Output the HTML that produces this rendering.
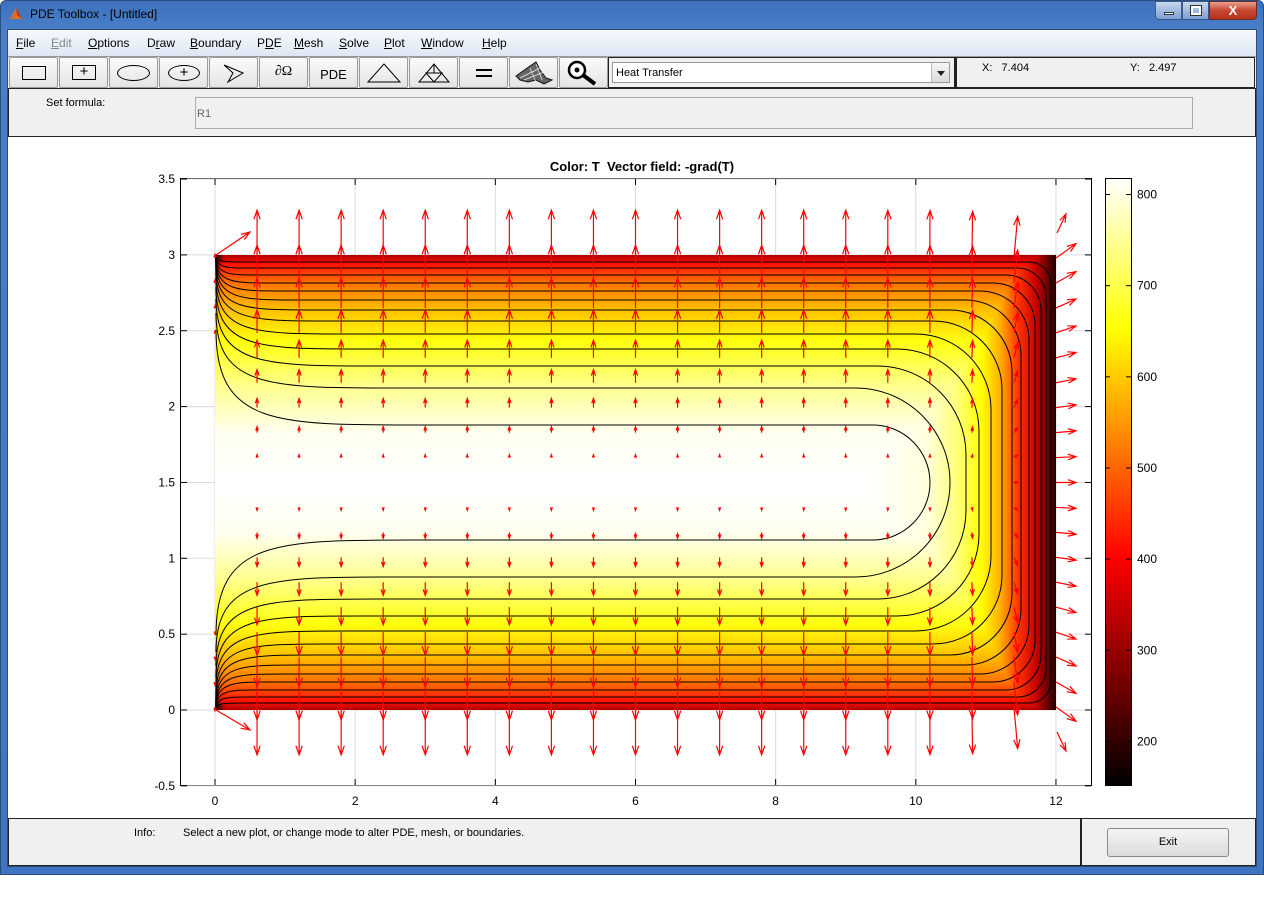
<!DOCTYPE html>
<html><head><meta charset="utf-8">
<style>
*{margin:0;padding:0;box-sizing:border-box}
body{width:1264px;height:914px;background:#fff;position:relative;overflow:hidden;font-family:"Liberation Sans",sans-serif;font-size:12px;color:#000}
.abs{position:absolute}
#frame{left:0;top:0;width:1264px;height:875px;background:linear-gradient(#3d70bd,#4a7fc8 30px,#3f74c0);border:1px solid #2a4d80;border-radius:6px 6px 0 0}
#title{left:30px;top:7px;font-size:12px}
#client{left:7px;top:29px;width:1250px;height:838px;background:#fff;border:1px solid #2c4a74}
#menu{left:8px;top:30px;width:1248px;height:26px;background:linear-gradient(#f6f9fd,#dde7f3)}
#menu span{position:absolute;top:6px;font-size:12px}
#tool{left:8px;top:56px;width:1248px;height:33px;background:#f0f0f0;border-top:1px solid #999;border-bottom:1px solid #222}
.btn{position:absolute;top:57px;width:49px;height:31px;background:linear-gradient(#fbfbfb,#e4e4e4);border:1px solid #9a9a9a;border-radius:2px}
#formula{left:8px;top:89px;width:1248px;height:48px;background:#f0f0f0;border-bottom:1px solid #222;border-left:1px solid #222;border-right:1px solid #222}
#info{left:8px;top:818px;width:1248px;height:48px;background:#f0f0f0;border:1px solid #222}
</style></head><body>
<div id="frame" class="abs"></div>
<svg class="abs" style="left:8px;top:6px" width="16" height="16"><polygon points="2,13 8,2 14,13" fill="#e8701a"/><polygon points="8,2 14,13 9,9" fill="#c0301a"/><polygon points="2,13 6,10 9,9" fill="#3a6fbf"/></svg>
<div id="title" class="abs">PDE Toolbox - [Untitled]</div>
<div class="abs" style="left:1155px;top:1px;width:27px;height:19px;border:1px solid #3b5b8c;border-radius:0 0 0 4px;background:linear-gradient(#c8d8ee,#7d9fcf)"><div class="abs" style="left:8px;top:10px;width:10px;height:3px;background:#fff;border:1px solid #333"></div></div>
<div class="abs" style="left:1182px;top:1px;width:27px;height:19px;border:1px solid #3b5b8c;background:linear-gradient(#c8d8ee,#7d9fcf)"><div class="abs" style="left:8px;top:4px;width:10px;height:9px;border:2px solid #fff;outline:1px solid #333"></div></div>
<div class="abs" style="left:1209px;top:1px;width:48px;height:19px;border:1px solid #6b2a22;border-radius:0 0 4px 0;background:linear-gradient(#e8a090,#c7462f 50%,#b83020);color:#fff;font-weight:bold;font-size:13px;text-align:center;line-height:17px">X</div>
<div id="client" class="abs"></div>
<div id="menu" class="abs">
<span style="left:8px"><u>F</u>ile</span><span style="left:43px;color:#888"><u>E</u>dit</span><span style="left:80px"><u>O</u>ptions</span><span style="left:139px">D<u>r</u>aw</span><span style="left:182px"><u>B</u>oundary</span><span style="left:249px">P<u>D</u>E</span><span style="left:286px"><u>M</u>esh</span><span style="left:331px"><u>S</u>olve</span><span style="left:376px"><u>P</u>lot</span><span style="left:413px"><u>W</u>indow</span><span style="left:474px"><u>H</u>elp</span>
</div>
<div id="tool" class="abs"></div>
<div class="btn" style="left:9px"><div class="abs" style="left:12px;top:8px;width:24px;height:14px;border:1px solid #000"></div></div>
<div class="btn" style="left:59px"><div class="abs" style="left:12px;top:7px;width:24px;height:15px;border:1px solid #000;text-align:center;line-height:12px;font-size:15px">+</div></div>
<div class="btn" style="left:109px"><div class="abs" style="left:7px;top:7px;width:33px;height:16px;border:1px solid #000;border-radius:50%"></div></div>
<div class="btn" style="left:159px"><div class="abs" style="left:8px;top:7px;width:32px;height:16px;border:1px solid #000;border-radius:50%;text-align:center;line-height:13px;font-size:15px">+</div></div>
<div class="btn" style="left:209px"><svg width="49" height="31"><path d="M14 7 L33 15 L18 24 L23 15 Z" fill="none" stroke="#000"/></svg></div>
<div class="btn" style="left:259px;text-align:center;line-height:27px;font-family:'Liberation Serif',serif;font-size:14px">∂Ω</div>
<div class="btn" style="left:309px;text-align:center;line-height:33px;font-size:13px">PDE</div>
<div class="btn" style="left:359px"><svg width="49" height="31"><path d="M8 24 L24 6 L40 24 Z" fill="none" stroke="#000"/></svg></div>
<div class="btn" style="left:409px"><svg width="49" height="31"><path d="M9 24 L24 6 L39 24 Z M16 15 L32 15 L24 24 Z M24 6 L24 15" fill="none" stroke="#000"/></svg></div>
<div class="btn" style="left:459px"><div class="abs" style="left:16px;top:11px;width:16px;height:2px;background:#000"></div><div class="abs" style="left:16px;top:17px;width:16px;height:2px;background:#000"></div></div>
<div class="btn" style="left:509px"><svg width="49" height="31"><path d="M6 18 L20 8 L26 4 L30 12 L36 20 L42 22 L34 26 L26 22 L18 24 L10 22 Z" fill="#666" stroke="#111"/><path d="M10 20 L30 10 M14 22 L34 14 M20 10 L26 24 M26 6 L32 22" stroke="#eee" stroke-width=".7"/></svg></div>
<div class="btn" style="left:559px"><svg width="49" height="31"><circle cx="17" cy="12" r="8" fill="#fff" stroke="#000" stroke-width="2.5"/><circle cx="17" cy="12" r="2.5" fill="#000"/><path d="M23 17 L35 26" stroke="#000" stroke-width="4"/></svg></div>
<div class="abs" style="left:608px;top:57px;width:347px;height:31px;border:1px solid #222;background:#f0f0f0"></div>
<div class="abs" style="left:612px;top:62px;width:338px;height:21px;border:1px solid #999;background:#fff;font-size:11px;padding:4px 3px">Heat Transfer</div>
<div class="abs" style="left:931px;top:63px;width:18px;height:19px;background:linear-gradient(#f4f4f4,#dcdcdc);border-left:1px solid #bbb"><div class="abs" style="left:5px;top:8px;border-left:4px solid transparent;border-right:4px solid transparent;border-top:5px solid #222"></div></div>
<div class="abs" style="left:955px;top:57px;width:300px;height:31px;border:1px solid #222;border-left:2px solid #222"></div>
<div class="abs" style="left:982px;top:62px;font-size:11px">X:&nbsp;&nbsp;&nbsp;7.404</div>
<div class="abs" style="left:1130px;top:62px;font-size:11px">Y:&nbsp;&nbsp;&nbsp;2.497</div>
<div id="formula" class="abs"></div>
<div class="abs" style="left:46px;top:97px;font-size:11px">Set formula:</div>
<div class="abs" style="left:195px;top:97px;width:998px;height:32px;border:1px solid #aaa;background:#f0f0f0;font-size:11px;color:#666;padding:10px 1px">R1</div>

<svg class="abs" style="left:0;top:0" width="1264" height="914" id="plot">
<defs>
<linearGradient id="gv" x1="0" y1="255" x2="0" y2="710" gradientUnits="userSpaceOnUse">
<stop offset="0" stop-color="#b00000"/><stop offset=".02" stop-color="#ff1000"/><stop offset=".06" stop-color="#ff7000"/><stop offset=".12" stop-color="#ffc000"/><stop offset=".19" stop-color="#ffff10"/><stop offset=".29" stop-color="#ffff90"/><stop offset=".39" stop-color="#fffff0"/><stop offset=".5" stop-color="#ffffff"/><stop offset=".61" stop-color="#fffff0"/><stop offset=".71" stop-color="#ffff90"/><stop offset=".81" stop-color="#ffff10"/><stop offset=".88" stop-color="#ffc000"/><stop offset=".94" stop-color="#ff7000"/><stop offset=".98" stop-color="#ff1000"/><stop offset="1" stop-color="#b00000"/>
</linearGradient>
<linearGradient id="gh" x1="870" y1="0" x2="1056" y2="0" gradientUnits="userSpaceOnUse">
<stop offset="0" stop-color="#ffffff"/><stop offset=".3" stop-color="#ffffe0"/><stop offset=".48" stop-color="#ffff70"/><stop offset=".6" stop-color="#ffff00"/><stop offset=".7" stop-color="#ffb000"/><stop offset=".8" stop-color="#ff3000"/><stop offset=".9" stop-color="#c00000"/><stop offset=".96" stop-color="#600000"/><stop offset="1" stop-color="#200000"/>
</linearGradient>
<linearGradient id="gc" x1="0" y1="786" x2="0" y2="178" gradientUnits="userSpaceOnUse">
<stop offset="0" stop-color="#000"/><stop offset=".375" stop-color="#ff0000"/><stop offset=".75" stop-color="#ffff00"/><stop offset="1" stop-color="#fff"/>
</linearGradient>
<radialGradient id="rc"><stop offset="0" stop-color="#000"/><stop offset=".5" stop-color="#800000"/><stop offset="1" stop-color="#ff0000" stop-opacity="0"/></radialGradient>
<clipPath id="dom"><rect x="215" y="255" width="841" height="455"/></clipPath>
</defs>
<text x="642" y="171" text-anchor="middle" font-weight="bold" font-size="13" xml:space="preserve">Color: T  Vector field: -grad(T)</text>
<rect x="180.5" y="178.5" width="911" height="607" fill="#fff" stroke="#000"/>
<g stroke="#dcdcdc" id="grid"></g>
<g clip-path="url(#dom)" style="isolation:isolate">
<rect x="215" y="255" width="841" height="455" fill="url(#gv)"/>
<rect x="870" y="255" width="186" height="455" fill="url(#gh)" style="mix-blend-mode:darken"/>
<circle cx="215" cy="255" r="14" fill="url(#rc)"/><circle cx="215" cy="710" r="14" fill="url(#rc)"/>
</g>
<g id="cont" fill="none" stroke="#000" stroke-width="1"></g>
<g id="arr" fill="none" stroke="#ff0000" stroke-width="1.2"></g>
<g id="ticks" font-size="12" fill="#000"></g>
<rect x="1105.5" y="178.5" width="26" height="607" fill="url(#gc)" stroke="#000"/>
<g font-size="12" id="cb"></g>
</svg>

<div id="info" class="abs"></div>
<div class="abs" style="left:1080px;top:818px;width:2px;height:48px;background:#222"></div>
<div class="abs" style="left:134px;top:827px;font-size:11px">Info:</div>
<div class="abs" style="left:183px;top:827px;font-size:11px">Select a new plot, or change mode to alter PDE, mesh, or boundaries.</div>
<div class="abs" style="left:1107px;top:828px;width:122px;height:29px;border:1px solid #8a8a8a;border-radius:3px;background:linear-gradient(#f4f4f4,#dcdcdc);text-align:center;line-height:27px;font-size:11px">Exit</div>

<script>
var NS="http://www.w3.org/2000/svg";
function el(p,t,a,txt){var e=document.createElementNS(NS,t);for(var k in a)e.setAttribute(k,a[k]);if(txt)e.textContent=txt;document.getElementById(p).appendChild(e);return e;}
function px(x){return 215+x*70.08}function py(y){return 710-y*151.7}
for(var x=0;x<=12;x+=2){var X=px(x);el('grid','line',{x1:X,y1:179,x2:X,y2:785});el('ticks','line',{x1:X,y1:179,x2:X,y2:185,stroke:'#000'});el('ticks','line',{x1:X,y1:779,x2:X,y2:785,stroke:'#000'});el('ticks','text',{x:X,y:805,'text-anchor':'middle'},String(x));}
for(var y=-0.5;y<=3.5;y+=0.5){var Y=py(y);el('grid','line',{x1:181,y1:Y,x2:1091,y2:Y});el('ticks','line',{x1:181,y1:Y,x2:187,y2:Y,stroke:'#000'});el('ticks','line',{x1:1085,y1:Y,x2:1091,y2:Y,stroke:'#000'});el('ticks','text',{x:175,y:Y+4,'text-anchor':'end'},String(y));}
[200,300,400,500,600,700,800].forEach(function(v){var Y=787-(v-150)*0.9115;el('cb','line',{x1:1126,y1:Y,x2:1131,y2:Y,stroke:'#000'});el('cb','line',{x1:1105,y1:Y,x2:1110,y2:Y,stroke:'#000'});el('cb','text',{x:1137,y:Y+4},String(v));});
var tops=[262,268,275,283,291,300,310,321,334,349,366,388,425];
var rights=[1051,1046,1041,1035,1029,1021,1012,1002,991,979,966,950,930];
var M=482.5;
for(var i=0;i<13;i++){var yt=tops[i],xr=rights[i],f=i/12;
var yl=256+Math.pow(f,3)*74,xh=245+Math.pow(f,1.3)*170;
var r=Math.min(M-yt,22+f*80);var k=0.552*r;
var d='M216,'+yl+' C216,'+yt+' '+(216+(xh-216)*0.3)+','+yt+' '+xh+','+yt+' L'+(xr-r)+','+yt+' C'+(xr-r+k)+','+yt+' '+xr+','+(yt+r-k)+' '+xr+','+(yt+r)+' L'+xr+','+(2*M-yt-r)+' C'+xr+','+(2*M-yt-r+k)+' '+(xr-r+k)+','+(2*M-yt)+' '+(xr-r)+','+(2*M-yt)+' L'+xh+','+(2*M-yt)+' C'+(216+(xh-216)*0.3)+','+(2*M-yt)+' 216,'+(2*M-yt)+' 216,'+(2*M-yl);
el('cont','path',{d:d});}
function arrow(x1,y1,x2,y2){var dx=x2-x1,dy=y2-y1,L=Math.sqrt(dx*dx+dy*dy);if(L<1.5)return;var h=Math.min(9,0.3*L+2),ux=dx/L,uy=dy/L;
var d='M'+x1+','+y1+' L'+x2+','+y2+' M'+(x2-h*ux+h*0.35*uy)+','+(y2-h*uy-h*0.35*ux)+' L'+x2+','+y2+' L'+(x2-h*ux-h*0.35*uy)+','+(y2-h*uy+h*0.35*ux);el('arr','path',{d:d});}
for(var c=0;c<=20;c++){var x=215+c*42.05;
for(var j=-9;j<=9;j++){var y=M+j*24.94;var dt=y-255,db=710-y,dr=1056-x;
var vy=50*Math.exp(-dt/110)-50*Math.exp(-db/110);
vy*=(1-0.7*Math.exp(-dr/25));
var vx=20*Math.exp(-dr/25);
if(c==0){vy*=0.08;vx=0;}
arrow(x,y,x+vx,y-vy);}}
arrow(216,255,250,232);arrow(216,710,250,730);arrow(1057,233,1066,214);arrow(1057,732,1066,751);
</script>
</body></html>
